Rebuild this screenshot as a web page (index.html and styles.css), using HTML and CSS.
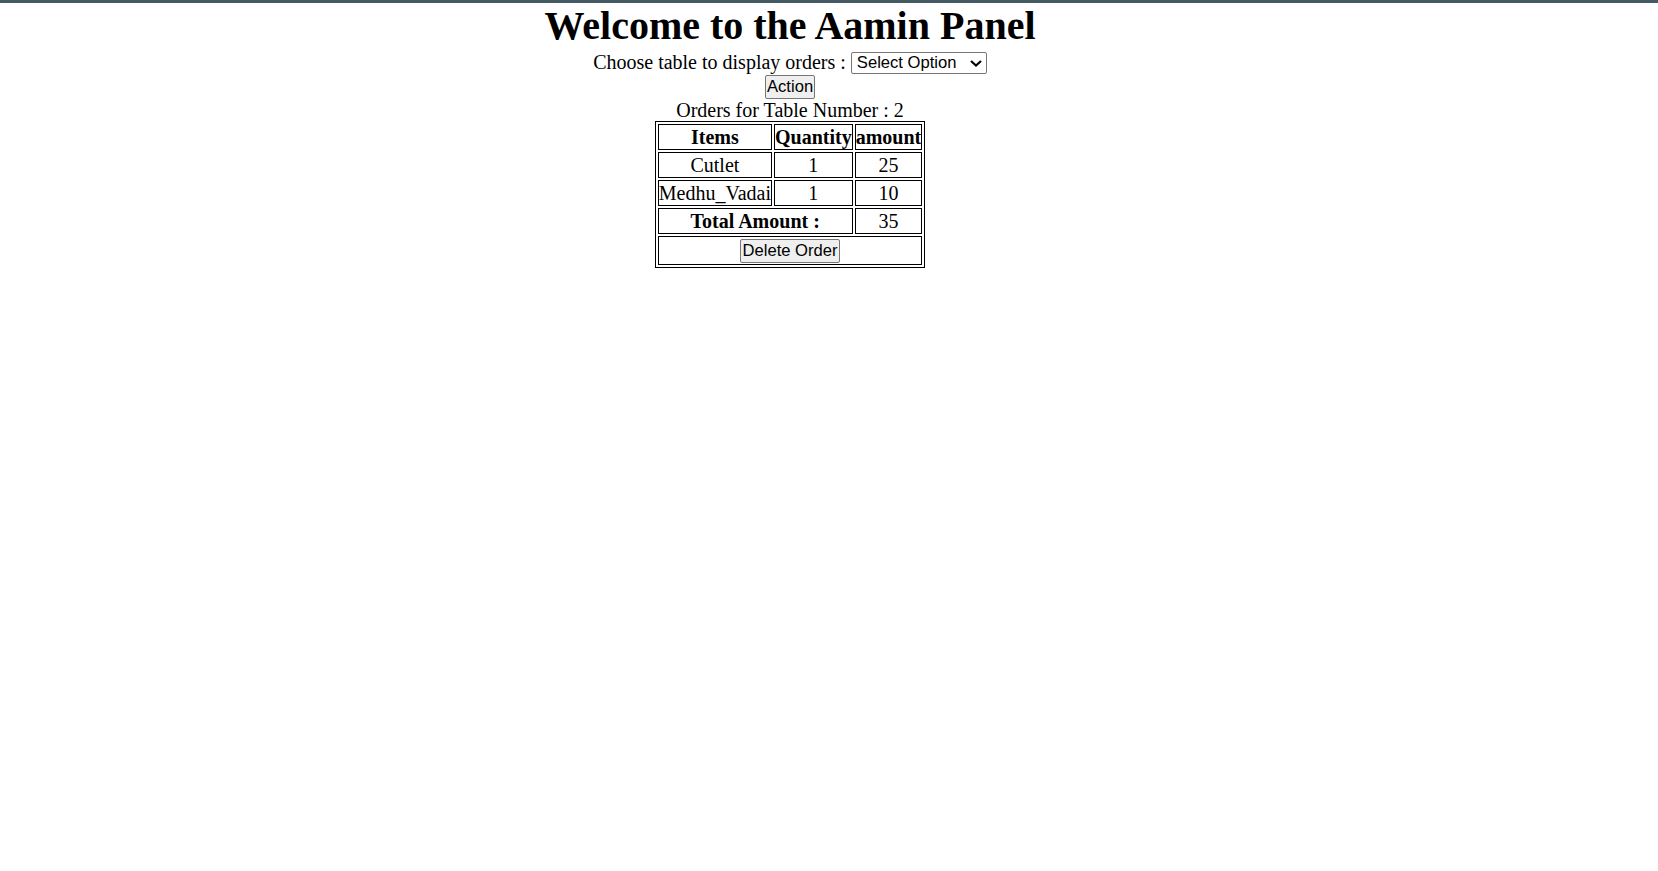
FILE: index.html
```html
<!DOCTYPE html>
<html>
<head>
<meta charset="utf-8">
<title>Admin Panel</title>
<link rel="stylesheet" href="styles.css">
</head>
<body>
<div class="page">
  <h1 class="title">Welcome to the Aamin Panel</h1>
  <div class="choose">Choose table to display orders : <span class="select-wrap"><select class="picker"><option>Select Option</option></select><svg class="chevron" width="12" height="7" viewBox="0 0 12 7"><polyline points="1,1 6,5.5 11,1" fill="none" stroke="#000" stroke-width="2.2"/></svg></span></div>
  <div class="action-row"><button class="btn">Action</button></div>
  <div class="caption">Orders for Table Number : 2</div>
  <table class="orders">
    <tr><th>Items</th><th>Quantity</th><th>amount</th></tr>
    <tr><td>Cutlet</td><td>1</td><td>25</td></tr>
    <tr><td>Medhu_Vadai</td><td>1</td><td>10</td></tr>
    <tr><th colspan="2">Total Amount :</th><td>35</td></tr>
    <tr><td colspan="3"><button class="btn">Delete Order</button></td></tr>
  </table>
</div>
</body>
</html>
```

FILE: styles.css
```css
html, body {
  margin: 0;
  padding: 0;
  background: #ffffff;
}
body {
  border-top: 3px solid #455a64;
  font-family: "Liberation Serif", "Times New Roman", serif;
  font-size: 20px;
  color: #000;
}
.page {
  width: 1580px;
  text-align: center;
}
.title {
  margin: 0;
  font-size: 40px;
  font-weight: bold;
  line-height: 46px;
}
.choose {
  height: 25px;
  line-height: 26px;
}
.select-wrap {
  position: relative;
  display: inline-block;
  vertical-align: 1px;
  line-height: 0;
}
.picker {
  -webkit-appearance: none;
  appearance: none;
  font-family: "Liberation Sans", Arial, sans-serif;
  font-size: 16.6px;
  height: 22px;
  width: 136px;
  padding: 0 20px 0 5px;
  border: 1px solid #767676;
  border-radius: 2px;
  background: #fff;
  color: #000;
  text-align: left;
}
.chevron {
  position: absolute;
  right: 5px;
  top: 8px;
  pointer-events: none;
}
.action-row {
  height: 25px;
}
.btn {
  font-family: "Liberation Sans", Arial, sans-serif;
  font-size: 16.6px;
  height: 24px;
  padding: 0 1px;
  border: 1px solid #767676;
  border-radius: 2px;
  background: #efefef;
  color: #000;
  line-height: 20px;
}
.action-row .btn {
  width: 50px;
}
.caption {
  height: 22px;
  line-height: 22px;
}
.orders {
  margin: 0 auto;
  border: 1px solid #000;
  border-spacing: 2px;
  border-collapse: separate;
}
.orders th,
.orders td {
  border: 1px solid #000;
  padding: 1px 0;
  text-align: center;
  line-height: 22px;
  height: 22px;
}
.orders .btn {
  width: 100px;
}
```
